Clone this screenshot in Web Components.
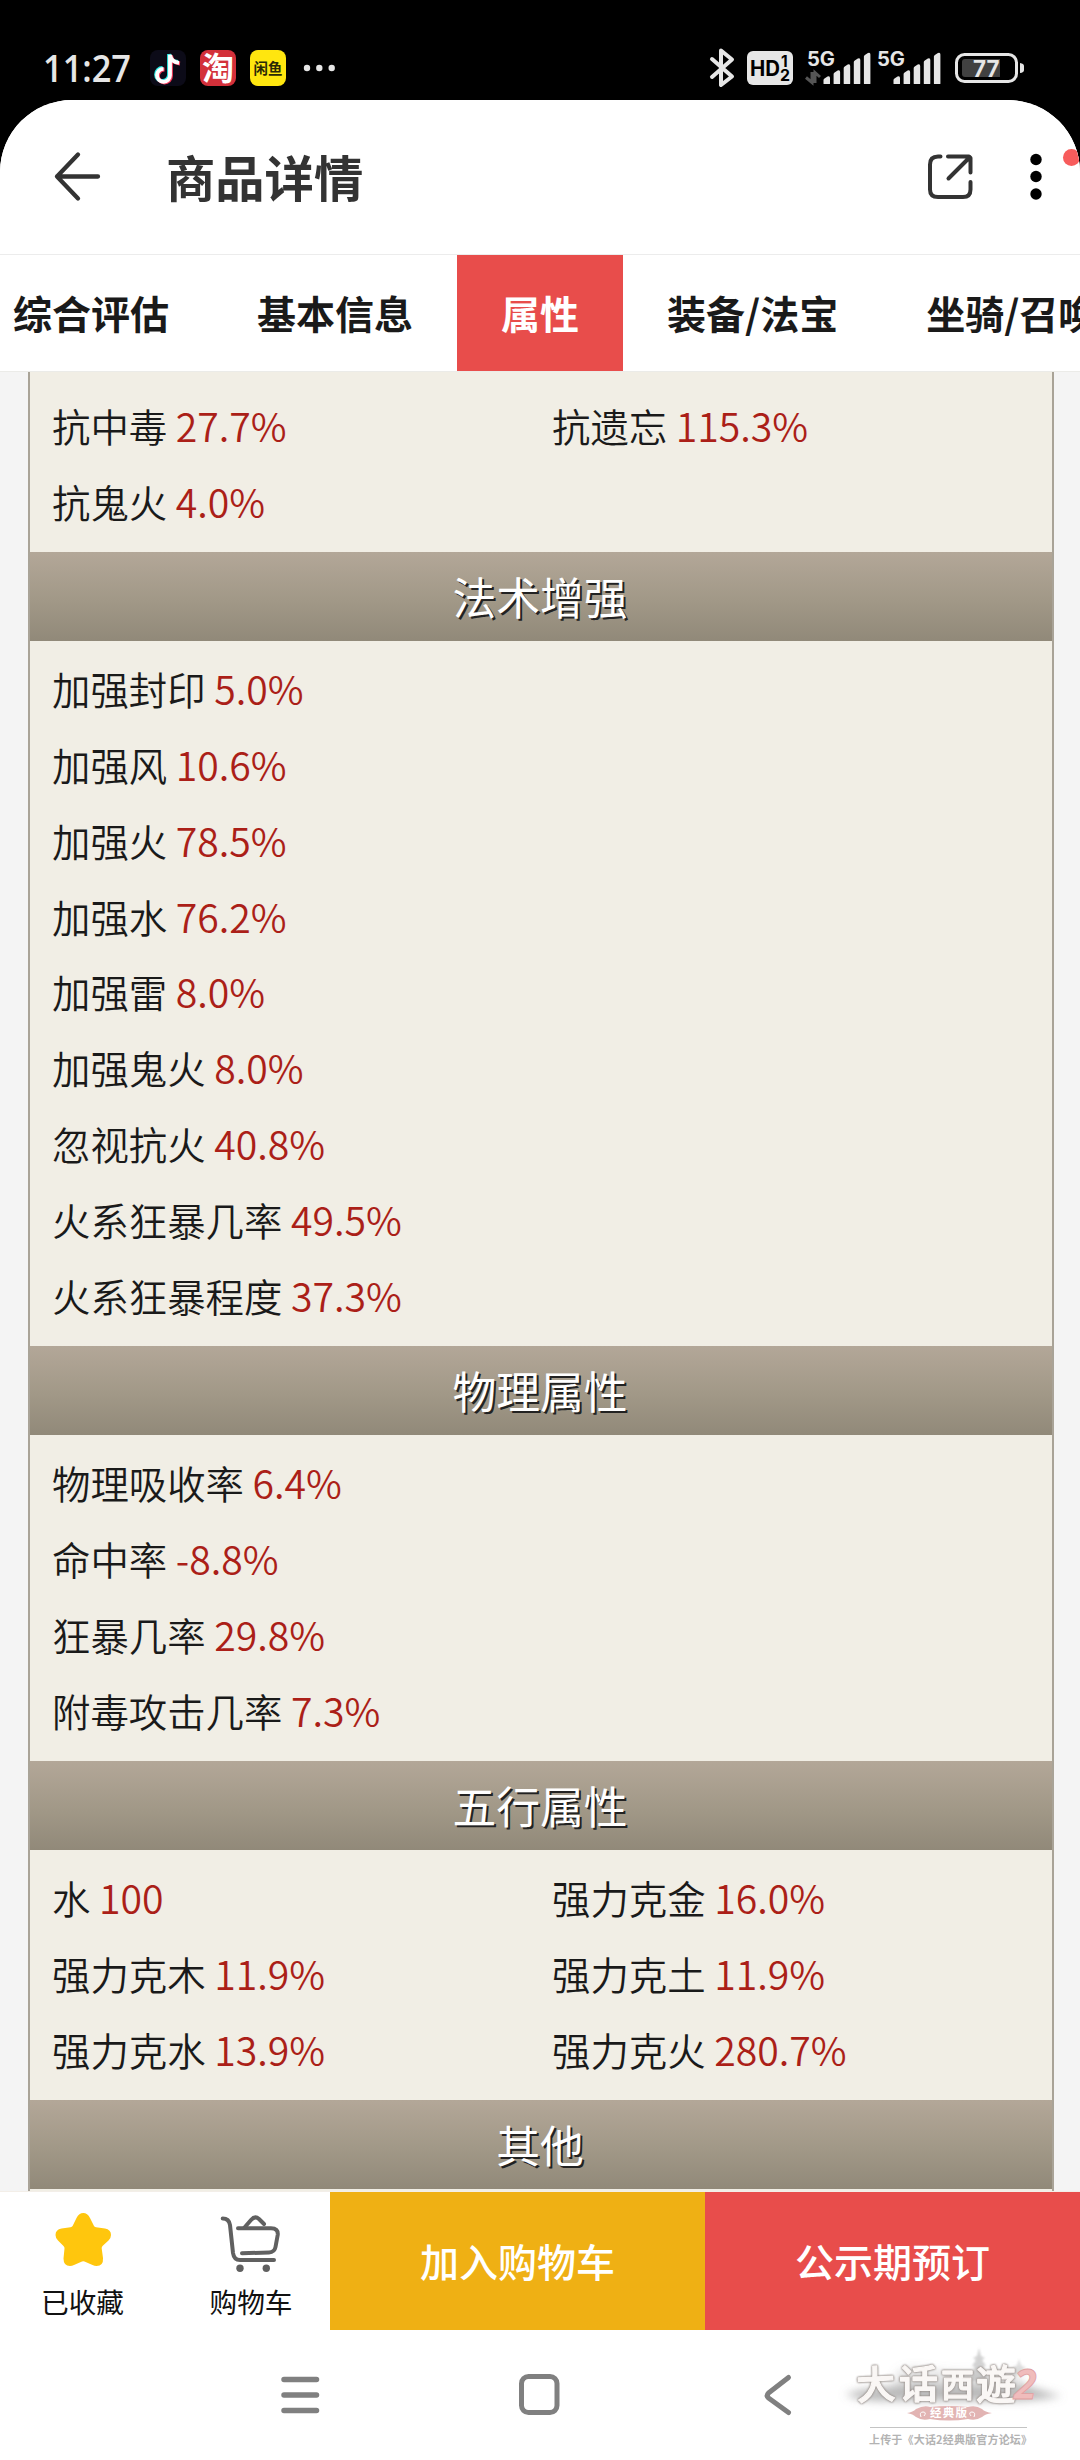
<!DOCTYPE html>
<html lang="zh-CN">
<head>
<meta charset="UTF-8">
<title>商品详情</title>
<style>
    html, body {
        margin: 0;
        padding: 0;
    }

    body {
        width: 1080px;
        height: 2460px;
        overflow: hidden;
        background: #000;
        color: #1a1a1a;
        font-family: "Noto Sans CJK SC", sans-serif;
        --accent: #e84d4b;
        --gold: #efb014;
        --value: #ab1f18;
        --page: #f4f4f4;
        --panel: #f1eee5;
    }
</style>
</head>
<body>
<trade-app>
    <status-bar slot="status" time="11:27" battery="77"></status-bar>
    <title-bar slot="top">商品详情</title-bar>
    <tab-bar slot="top">
        <tab-item>综合评估</tab-item>
        <tab-item>基本信息</tab-item>
        <tab-item active>属性</tab-item>
        <tab-item>装备/法宝</tab-item>
        <tab-item>坐骑/召唤兽</tab-item>
    </tab-bar>

    <attr-section>
        <attr-row label="抗中毒" value="27.7%"></attr-row>
        <attr-row label="抗遗忘" value="115.3%"></attr-row>
        <attr-row label="抗鬼火" value="4.0%"></attr-row>
    </attr-section>
    <attr-section heading="法术增强" single>
        <attr-row label="加强封印" value="5.0%"></attr-row>
        <attr-row label="加强风" value="10.6%"></attr-row>
        <attr-row label="加强火" value="78.5%"></attr-row>
        <attr-row label="加强水" value="76.2%"></attr-row>
        <attr-row label="加强雷" value="8.0%"></attr-row>
        <attr-row label="加强鬼火" value="8.0%"></attr-row>
        <attr-row label="忽视抗火" value="40.8%"></attr-row>
        <attr-row label="火系狂暴几率" value="49.5%"></attr-row>
        <attr-row label="火系狂暴程度" value="37.3%"></attr-row>
    </attr-section>
    <attr-section heading="物理属性" single>
        <attr-row label="物理吸收率" value="6.4%"></attr-row>
        <attr-row label="命中率" value="-8.8%"></attr-row>
        <attr-row label="狂暴几率" value="29.8%"></attr-row>
        <attr-row label="附毒攻击几率" value="7.3%"></attr-row>
    </attr-section>
    <attr-section heading="五行属性">
        <attr-row label="水" value="100"></attr-row>
        <attr-row label="强力克金" value="16.0%"></attr-row>
        <attr-row label="强力克木" value="11.9%"></attr-row>
        <attr-row label="强力克土" value="11.9%"></attr-row>
        <attr-row label="强力克水" value="13.9%"></attr-row>
        <attr-row label="强力克火" value="280.7%"></attr-row>
    </attr-section>
    <attr-section heading="其他"></attr-section>

    <action-bar slot="bottom"></action-bar>
    <system-nav slot="bottom"></system-nav>
    <forum-mark slot="overlay"></forum-mark>
</trade-app>

<script>
// Shared base: attaches the shadow root and fills it from render()
class BaseElement extends HTMLElement {
    constructor() {
        super();
        this.attachShadow({ mode: 'open' });
    }

    connectedCallback() {
        this.shadowRoot.innerHTML = this.render();
    }
}

class TradeApp extends BaseElement {
    render() {
        return `
            <style>
                :host {
                    display: flex;
                    flex-direction: column;
                    position: relative;
                    width: 1080px;
                    height: 2460px;
                    overflow: hidden;
                }

                .sheet {
                    flex: 1;
                    min-height: 0;
                    display: flex;
                    flex-direction: column;
                    background: #fff;
                    border-radius: 72px 72px 0 0;
                    overflow: hidden;
                }

                .scroll {
                    flex: 1;
                    min-height: 0;
                    overflow: hidden;
                    display: flex;
                    flex-direction: column;
                    justify-content: flex-end;
                    padding: 0 26px 0 28px;
                    background: var(--page);
                }

                .panel {
                    flex: 1;
                    display: flex;
                    flex-direction: column;
                    justify-content: flex-end;
                    border: 2px solid #a9a397;
                    border-width: 0 2px;
                    padding-bottom: 2px;
                    background: var(--panel);
                }
            </style>
            <slot name="status"></slot>
            <div class="sheet">
                <slot name="top"></slot>
                <div class="scroll"><div class="panel"><slot></slot></div></div>
                <slot name="bottom"></slot>
            </div>
            <slot name="overlay"></slot>
        `;
    }
}

class StatusBar extends BaseElement {
    // Five rising bars with slanted tops
    signal(x) {
        const tops = [76.5, 70.5, 64.5, 58.5, 53];
        return tops.map((top, i) => {
            const left = x + i * 10.1;
            return `<path d="M${left} 83.500V${top + 3.5}q0-1 1-1.600l3-1.900q2.500-1 2.500 1.500V83.500q0 .5-.5.5h-5.500q-.5 0-.5-.5z"/>`;
        }).join('');
    }

    render() {
        return `
            <style>
                :host {
                    display: block;
                    flex: none;
                    height: 100px;
                    background: #000;
                }

                svg {
                    display: block;
                }

                text {
                    font-family: "Noto Sans CJK SC", sans-serif;
                }

                .num {
                    font-family: "Open Sans", "Noto Sans", sans-serif;
                    font-weight: 600;
                }

                .geo {
                    font-family: Inter, sans-serif;
                    font-weight: 700;
                }
            </style>
            <svg width="1080" height="100" viewBox="0 0 1080 100" fill="#e6e6e6">
                <text class="num" x="43" y="82" font-size="37.500" textLength="88" lengthAdjust="spacingAndGlyphs">${this.getAttribute('time')}</text>

                <rect x="150" y="50" width="36" height="36" rx="8" fill="#0c0b18"/>
                <g fill="none" stroke-width="3.800">
                    <path d="M169 54V74.500a6.500 6.500 0 1 1-6.500-6.500M169 54c.6 4.500 3.500 7.500 9 8" stroke="#25e9e4"/>
                    <path d="M171 55.500V76a6.500 6.500 0 1 1-6.500-6.500M171 55.500c.6 4.500 3.500 7.500 9 8" stroke="#f73b5c"/>
                    <path d="M170 54.800V75.300a6.500 6.500 0 1 1-6.500-6.500M170 54.800c.6 4.500 3.500 7.500 9 8" stroke="#fff"/>
                </g>

                <rect x="200" y="50" width="36" height="36" rx="8" fill="#d3303a"/>
                <text x="202" y="79.500" font-size="32" font-weight="700" fill="#fff">淘</text>

                <rect x="250" y="50" width="36" height="36" rx="8" fill="#ffe60f"/>
                <text x="253.500" y="73.500" font-size="14.500" font-weight="700" fill="#2b2906">闲鱼</text>

                <circle cx="307" cy="68" r="3.200"/>
                <circle cx="319.300" cy="68" r="3.200"/>
                <circle cx="331.700" cy="68" r="3.200"/>

                <path d="M712 59L732 76.500L721 85V50.500L732 59.500L712 77" fill="none" stroke="#e6e6e6" stroke-width="4" stroke-linejoin="round" stroke-linecap="round"/>

                <rect x="747" y="51" width="46" height="34" rx="6"/>
                <text class="geo" x="750" y="75.500" font-size="21" textLength="30" lengthAdjust="spacingAndGlyphs" fill="#000">HD</text>
                <text class="geo" x="781" y="66.500" font-size="15.500" fill="#000">1</text>
                <text class="geo" x="780" y="81" font-size="15.500" textLength="10" lengthAdjust="spacingAndGlyphs" fill="#000">2</text>

                <text class="geo" x="807" y="66" font-size="19.500" textLength="28" lengthAdjust="spacingAndGlyphs">5G</text>
                <path d="M812 72v10.500l-6-5M815 83v-10.500l5 4.500" fill="none" stroke="#555" stroke-width="3"/>
                ${this.signal(823.5)}
                <text class="geo" x="877" y="66" font-size="19.500" textLength="28" lengthAdjust="spacingAndGlyphs">5G</text>
                ${this.signal(893.5)}

                <rect x="956.500" y="54.500" width="60" height="27" rx="8" fill="none" stroke="#e6e6e6" stroke-width="3"/>
                <path d="M1020 63q4 .5 4 3v4q0 2.500-4 3z"/>
                <path d="M965 59h35v18h-35q-3 0-3-3v-12q0-3 3-3z" fill="#414141"/>
                <text class="geo" x="973" y="76.500" font-size="22.500" textLength="26.500" lengthAdjust="spacingAndGlyphs">${this.getAttribute('battery')}</text>
            </svg>
        `;
    }
}

class TitleBar extends BaseElement {
    render() {
        return `
            <style>
                :host {
                    display: flex;
                    flex: none;
                    align-items: center;
                    box-sizing: border-box;
                    height: 155px;
                    padding: 0 0 0 53px;
                    border-bottom: 1px solid #ececec;
                    background: #fff;
                    color: #333;
                }

                h1 {
                    flex: 1;
                    margin: 0 0 2px 64px;
                    font-size: 49.3px;
                    font-weight: 600;
                    line-height: 72px;
                }

                svg {
                    display: block;
                    flex: none;
                }

                .share {
                    margin-right: 51px;
                }
            </style>
            <svg width="49" height="52" viewBox="0 0 49 52" fill="none" stroke="#333" stroke-width="4.300" stroke-linecap="round" stroke-linejoin="round">
                <path d="M25 3.500L4 25.500L25 47.500M4 25.500H45"/>
            </svg>
            <h1><slot></slot></h1>
            <svg class="share" width="50" height="50" viewBox="0 0 50 50" fill="none" stroke="#333" stroke-width="4" stroke-linecap="round">
                <path d="M14.500 4.500H12Q4 4.500 4 12.500V37.500Q4 45 12 45H37Q44.500 45 44.500 37.500V30"/>
                <path d="M22 4.500H43L44.500 6V20.500M43.500 5.500L22.500 26.500" stroke-linejoin="round"/>
            </svg>
            <svg width="53" height="60" viewBox="0 0 53 60">
                <g fill="#000">
                    <circle cx="9" cy="12.500" r="5.700"/>
                    <circle cx="9" cy="29.500" r="5.700"/>
                    <circle cx="9" cy="47" r="5.700"/>
                </g>
                <circle cx="44.500" cy="10.500" r="8.500" fill="#f75c5c"/>
            </svg>
        `;
    }
}

class TabBar extends BaseElement {
    render() {
        return `
            <style>
                :host {
                    display: flex;
                    flex: none;
                    height: 116px;
                    background: #fff;
                    border-bottom: 1px solid #ebebe8;
                    overflow: hidden;
                }

                /* the strip is scrolled so the active tab sits mid-screen */
                .strip {
                    display: flex;
                    flex: none;
                    margin-left: -31px;
                }
            </style>
            <div class="strip"><slot></slot></div>
        `;
    }
}

class TabItem extends BaseElement {
    render() {
        return `
            <style>
                :host {
                    display: flex;
                    flex: none;
                    align-items: center;
                    box-sizing: border-box;
                    height: 116px;
                    padding: 0 44px 3px;
                    font-size: 39px;
                    font-weight: 600;
                    line-height: 58px;
                    white-space: nowrap;
                }

                :host([active]) {
                    background: var(--accent);
                    color: #fff;
                }
            </style>
            <span><slot></slot></span>
        `;
    }
}

class AttrSection extends BaseElement {
    render() {
        const heading = this.getAttribute('heading');
        return `
            <style>
                :host {
                    display: block;
                }

                h2 {
                    height: 89.3px;
                    margin: 0;
                    padding-right: 2px;
                    background: linear-gradient(#b3a798, #a19887 55%, #918979);
                    color: #fff;
                    font-size: 43.8px;
                    font-weight: 400;
                    line-height: 89px;
                    text-align: center;
                    text-shadow: 2px 2px 0 #222;
                }

                .rows {
                    display: grid;
                    grid-template-columns: ${this.hasAttribute('single') ? '1fr' : '500px 1fr'};
                    grid-auto-rows: 75.9px;
                    padding: 11px 22px;
                }
            </style>
            ${heading ? `<h2>${heading}</h2>` : ''}
            ${this.children.length ? '<div class="rows"><slot></slot></div>' : ''}
        `;
    }
}

class AttrRow extends BaseElement {
    render() {
        return `
            <style>
                :host {
                    display: block;
                    font-size: 38.4px;
                    font-weight: 350;
                    line-height: 73px;
                    white-space: nowrap;
                }

                b {
                    font-size: 39.2px;
                    font-weight: inherit;
                    line-height: 1;
                    color: var(--value);
                }
            </style>
            <span>${this.getAttribute('label')}</span> <b>${this.getAttribute('value')}</b>
        `;
    }
}

class ActionBar extends BaseElement {
    render() {
        return `
            <style>
                :host {
                    display: grid;
                    flex: none;
                    grid-template-columns: 165px 165px 375px 375px;
                    height: 138px;
                    border-top: 1px solid #f3eee8;
                    background: #fff;
                }

                .tool {
                    display: flex;
                    flex-direction: column;
                    align-items: center;
                    font-size: 27.7px;
                    line-height: 40px;
                    color: #111;
                }

                .tool svg {
                    margin: 18px 0 11px;
                    overflow: visible;
                }

                .cart {
                    padding-left: 7px;
                }

                .btn {
                    display: flex;
                    align-items: center;
                    justify-content: center;
                    padding-bottom: 2px;
                    color: #fff;
                    font-size: 39px;
                    font-weight: 500;
                    line-height: 58px;
                }

                .add {
                    background: var(--gold);
                }

                .order {
                    background: var(--accent);
                }
            </style>
            <div class="tool">
                <svg width="60" height="60" viewBox="0 0 60 60">
                    <path d="M30.300 3Q34.500 3 37 8L41 16Q41.500 17 43 17.300L52 18.500Q58 19.500 58 25Q58 28 55.500 30.500L49.500 36Q48.500 37 48.700 38.500L50 48Q50.500 56 43.500 56Q41.500 56 39.500 55L31.500 51.500Q30.300 51 29 51.500L21 55Q19 56 17 56Q10.500 56 10.500 48.500L11.500 38.500Q11.700 37 10.500 36L5 30.500Q2.500 28 2.500 25Q2.500 19.500 8.500 18.500L17.500 17.300Q19 17 19.600 16L23.500 8Q26 3 30.300 3Z" fill="#ffc60d"/>
                </svg>
                <span>已收藏</span>
            </div>
            <div class="tool cart">
                <svg width="64" height="60" viewBox="0 0 64 60" fill="none" stroke="#606060" stroke-width="4" stroke-linecap="round" stroke-linejoin="round">
                    <path d="M3.700 8.500Q10 8.500 11 15L14 43Q15 50 21 50H55"/>
                    <path d="M19 18.300H52Q59.500 18.300 58.700 25L56.500 37Q55.500 42.300 50 42.500L23 43.200"/>
                    <path d="M25.500 17.500L32 10Q36 5.500 40 9L45 14"/>
                    <g fill="#606060" stroke="none"><circle cx="21" cy="58.300" r="3.700"/><circle cx="47.300" cy="58.300" r="3.700"/></g>
                </svg>
                <span>购物车</span>
            </div>
            <div class="btn add">加入购物车</div>
            <div class="btn order">公示期预订</div>
        `;
    }
}

class SystemNav extends BaseElement {
    render() {
        return `
            <style>
                :host {
                    display: flex;
                    flex: none;
                    align-items: center;
                    gap: 192px;
                    box-sizing: border-box;
                    height: 130px;
                    padding-left: 276px;
                    background: #fff;
                }

                svg {
                    display: block;
                }
            </style>
            <svg width="48" height="48" viewBox="0 0 48 48" stroke="#808080" stroke-width="5.500" stroke-linecap="round">
                <path d="M8 8.500H40.500M8 24H40.500M8 39.500H40.500"/>
            </svg>
            <svg width="48" height="48" viewBox="0 0 48 48" fill="none" stroke="#808080" stroke-width="5">
                <rect x="5.500" y="5.500" width="35.500" height="36" rx="7"/>
            </svg>
            <svg width="48" height="48" viewBox="0 0 48 48" fill="none" stroke="#808080" stroke-width="5" stroke-linecap="round" stroke-linejoin="round">
                <path d="M32.500 6.500L12.500 22Q10 24.500 12.500 27L32.500 41.500"/>
            </svg>
        `;
    }
}

// Forum stamp laid over the lower right corner
class ForumMark extends BaseElement {
    render() {
        return `
            <style>
                :host {
                    position: absolute;
                    right: 0;
                    bottom: 0;
                    width: 260px;
                    height: 130px;
                }

                text {
                    font-family: "Noto Sans CJK SC", sans-serif;
                }

                .brush {
                    filter: drop-shadow(0 0 .8px #8d8784) drop-shadow(0 .5px .6px #a39a94);
                }
            </style>
            <svg width="260" height="130" viewBox="0 0 260 130">
                <defs>
                    <filter id="mist" x="-20%" y="-60%" width="140%" height="220%"><feGaussianBlur stdDeviation="4"/></filter>
                    <filter id="soft"><feGaussianBlur stdDeviation="1"/></filter>
                </defs>
                <g filter="url(#mist)" fill="#8e8e8e">
                    <path d="M25 64Q60 54 110 55T205 55Q225 62 242 66Q220 70 200 71H60Q40 71 25 64z" opacity=".6"/>
                    <path d="M75 46Q80 34 105 38T160 42L200 40V58H75z" opacity=".22"/>
                </g>
                <g filter="url(#soft)" fill="#b5b5b5" opacity=".6">
                    <path d="M159 18l2 8 4 2-3 2 4 6-3 1 4 6v8h-16v-8l4-6-3-1 4-6-3-2 4-2z"/>
                    <path d="M199 29l2 6 5 3-3 1 4 6h-16l4-6-3-1 5-3z" opacity=".7"/>
                </g>
                <g class="brush" fill="#faf7f5" stroke="#faf7f5" stroke-width="1.300" stroke-linejoin="round" font-weight="500">
                    <text transform="translate(37 70) rotate(-3)" font-size="39">大</text>
                    <text x="79" y="68" font-size="39">话</text>
                    <text x="121" y="67" font-size="33">西</text>
                    <text x="156" y="69" font-size="40">遊</text>
                </g>
                <text x="194" y="69" font-size="41" font-weight="700" font-style="italic" fill="#f0bcbc" stroke="#e0a0a1" stroke-width=".8" style="font-family:'Noto Sans',sans-serif">2</text>
                <path d="M87 83q6-1 9-4q8-4 14-2q19-2 38 0q8-2 14 2q3 3 10 4q-7 1-10 4q-6 4-14 2q-19 3-38 0q-8 2-14-2q-3-3-9-4z" fill="#e2b4b3"/>
                <g fill="none" stroke="#fff"><path d="M101 87q-2-5 2-5t1 4M154 87q2-5-2-5t-1 4"/></g>
                <text x="110" y="87" font-size="11.500" font-weight="700" fill="#fff" textLength="37">经典版</text>
                <path d="M50 97.500H207" stroke="#c4c4c4"/>
                <text x="49" y="113.500" font-size="11" font-weight="700" fill="#b3b3b3" textLength="163">上传于《大话2经典版官方论坛》</text>
            </svg>
        `;
    }
}

customElements.define('trade-app', TradeApp);
customElements.define('status-bar', StatusBar);
customElements.define('title-bar', TitleBar);
customElements.define('tab-bar', TabBar);
customElements.define('tab-item', TabItem);
customElements.define('attr-section', AttrSection);
customElements.define('attr-row', AttrRow);
customElements.define('action-bar', ActionBar);
customElements.define('system-nav', SystemNav);
customElements.define('forum-mark', ForumMark);
</script>
</body>
</html>
